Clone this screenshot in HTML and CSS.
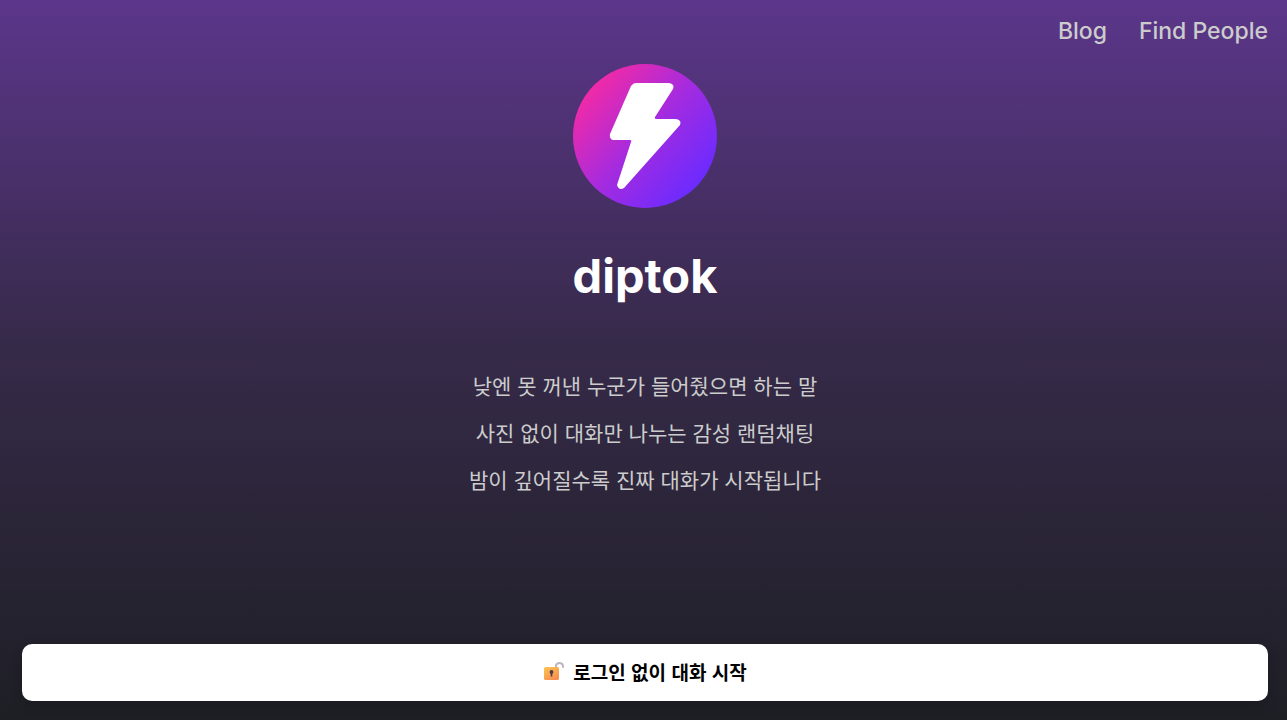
FILE: index.html
```
<!DOCTYPE html>
<html lang="ko">

<head>
	<meta charset="UTF-8">
	<meta name="viewport" content="width=device-width, initial-scale=1.0">
	<title>diptok</title>
	<link rel="stylesheet" href="styles.css">
</head>

<body>
	<header>
		<nav class="menu">
			<a href="#blog">Blog</a>
			<a href="#people">Find People</a>
		</nav>
	</header>
	<main>
		<svg class="logo" viewBox="0 0 144 144" aria-hidden="true">
			<defs>
				<linearGradient id="logo-bg" x1="0.1" y1="0.16" x2="0.88" y2="0.84">
					<stop offset="0" stop-color="#f42aa5" />
					<stop offset="0.5" stop-color="#a52bdf" />
					<stop offset="1" stop-color="#6b2bff" />
				</linearGradient>
			</defs>
			<circle cx="72" cy="72" r="72" fill="url(#logo-bg)" />
			<path fill="#fff" d="M63 19H96Q102 20 100 25L82 53Q81 55 84 55H103Q109 56 107 61L51 124Q46 127 44 121L58 78Q59 76 57 76H40Q36 75 37 70L58 22Q60 19 63 19Z" />
		</svg>
		<h1>diptok</h1>
		<div class="intro">
			<p>낮엔 못 꺼낸 누군가 들어줬으면 하는 말</p>
			<p>사진 없이 대화만 나누는 감성 랜덤채팅</p>
			<p>밤이 깊어질수록 진짜 대화가 시작됩니다</p>
		</div>
	</main>
	<footer>
		<button class="start" type="button">
			<svg class="lock" viewBox="0 0 22 22" aria-hidden="true">
				<defs>
					<linearGradient id="lock-body" x1="0" y1="0" x2="0.6" y2="1">
						<stop offset="0" stop-color="#fcc650" />
						<stop offset="1" stop-color="#f79052" />
					</linearGradient>
				</defs>
				<path d="M13 8V5.500A3.700 3.700 0 0 1 20 5.500V7" fill="none" stroke="#bcb3c4" stroke-width="2" stroke-linecap="round" />
				<rect x="1" y="7" width="15" height="13" rx="1.500" fill="url(#lock-body)" />
				<circle cx="8.500" cy="12" r="1.900" fill="#4b3b4b" />
				<path d="M7.700 12h1.600v4.500h-1.600z" fill="#4b3b4b" />
			</svg>
			로그인 없이 대화 시작
		</button>
	</footer>
</body>

</html>
```
FILE: styles.css
```
* {
	box-sizing: border-box;
}

body {
	display: flex;
	flex-direction: column;
	min-height: 100vh;
	margin: 0;
	padding: 15px 19px 19px 22px;
	background: linear-gradient(#5c368b, #362a49 48%, #1e1f25);
	color: #ccc;
	font-family: "Noto Sans CJK KR", sans-serif;
}

.menu {
	display: flex;
	justify-content: flex-end;
	gap: 32px;
}

.menu a {
	color: #ccc;
	font-family: Inter, sans-serif;
	font-size: 23px;
	font-weight: 500;
	line-height: 32px;
	text-decoration: none;
}

main {
	display: flex;
	flex: 1;
	flex-direction: column;
	align-items: center;
	padding-top: 17px;
}

.logo {
	width: 144px;
	height: 144px;
}

h1 {
	margin: 38px 0 0;
	color: white;
	font-family: Inter, sans-serif;
	font-size: 47px;
	font-weight: 700;
	line-height: 60px;
}

.intro {
	margin-top: 56px;
	font-size: 21px;
	line-height: 47px;
	text-align: center;
}

p {
	margin: 0;
}

.start {
	display: flex;
	justify-content: center;
	align-items: center;
	gap: 8px;
	width: 100%;
	height: 57px;
	padding: 0 0 3px;
	border: none;
	border-radius: 10px;
	background: white;
	box-shadow: 0 4px 12px rgba(0, 0, 0, 0.2);
	color: black;
	font-family: inherit;
	font-size: 19px;
	font-weight: 700;
	cursor: pointer;
}

.lock {
	width: 22px;
	height: 22px;
}
```
